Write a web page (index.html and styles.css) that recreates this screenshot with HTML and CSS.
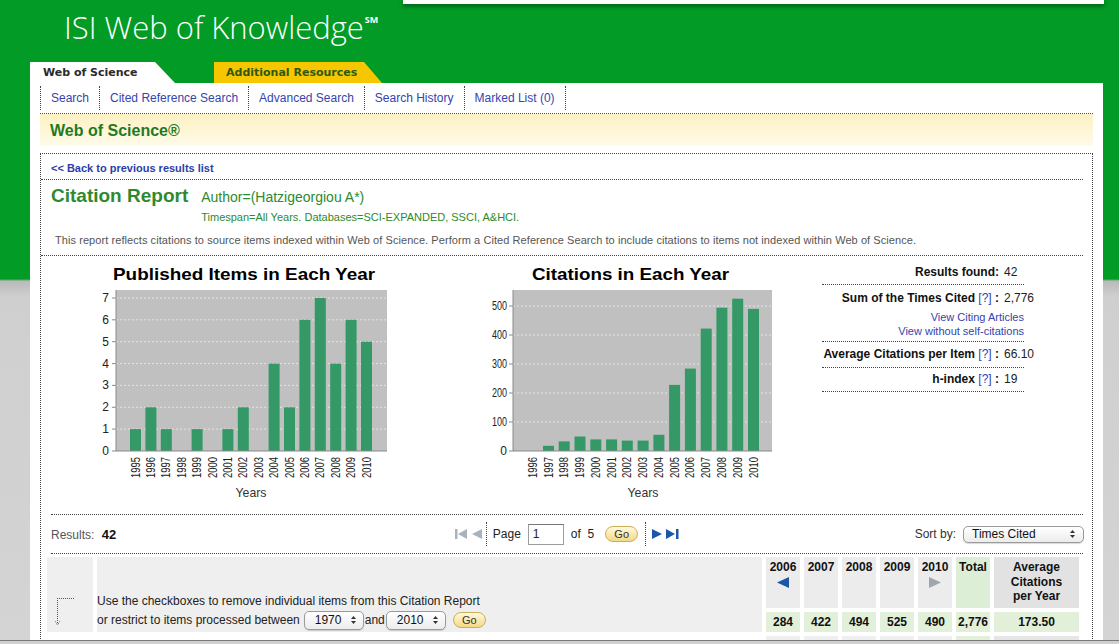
FILE: index.html
```html
<!DOCTYPE html>
<html lang="en">
<head>
    <meta charset="UTF-8">
    <title>ISI Web of Knowledge - Citation Report</title>
    <link rel="stylesheet" href="styles.css">
</head>
<body>
    <div class="top-strip"></div>
    <div class="brand">ISI Web of Knowledge<sup>SM</sup></div>

    <div class="tabs">
        <div class="tab tab-active">Web of Science</div>
        <div class="tab tab-resources">Additional Resources</div>
    </div>

    <div class="main">
        <ul class="nav">
            <li><a href="#">Search</a></li>
            <li><a href="#">Cited Reference Search</a></li>
            <li><a href="#">Advanced Search</a></li>
            <li><a href="#">Search History</a></li>
            <li><a href="#">Marked List (0)</a></li>
        </ul>

        <div class="product-bar">Web of Science®</div>

        <div class="report">
            <div class="back"><a href="#">&lt;&lt; Back to previous results list</a></div>

            <div class="report-title">
                <div class="report-head">
                    <h1>Citation Report</h1>
                    <div class="query">
                        <div class="author">Author=(Hatzigeorgiou A*)</div>
                        <div class="timespan">Timespan=All Years. Databases=SCI-EXPANDED, SSCI, A&amp;HCI.</div>
                    </div>
                </div>
                <p class="note">This report reflects citations to source items indexed within Web of Science. Perform a Cited Reference Search to include citations to items not indexed within Web of Science.</p>
            </div>

            <div class="charts">
                <!-- Published items per year -->
                <svg class="chart chart-published" width="399" height="250" viewBox="0 0 399 250">
                    <text class="chart-title" x="203" y="24" textLength="262" lengthAdjust="spacingAndGlyphs">Published Items in Each Year</text>
                    <rect class="plot" x="75" y="34" width="271" height="161"/>
                    <line class="grid" x1="75" y1="173.1" x2="346" y2="173.1"/>
                    <line class="grid" x1="75" y1="151.3" x2="346" y2="151.3"/>
                    <line class="grid" x1="75" y1="129.4" x2="346" y2="129.4"/>
                    <line class="grid" x1="75" y1="107.6" x2="346" y2="107.6"/>
                    <line class="grid" x1="75" y1="85.7" x2="346" y2="85.7"/>
                    <line class="grid" x1="75" y1="63.8" x2="346" y2="63.8"/>
                    <line class="grid" x1="75" y1="42" x2="346" y2="42"/>

                    <rect class="bar" x="89" y="173.1" width="11" height="21.9"/>
                    <rect class="bar" x="104.4" y="151.3" width="11" height="43.7"/>
                    <rect class="bar" x="119.8" y="173.1" width="11" height="21.9"/>
                    <rect class="bar" x="150.6" y="173.1" width="11" height="21.9"/>
                    <rect class="bar" x="181.4" y="173.1" width="11" height="21.9"/>
                    <rect class="bar" x="196.8" y="151.3" width="11" height="43.7"/>
                    <rect class="bar" x="227.6" y="107.6" width="11" height="87.4"/>
                    <rect class="bar" x="243" y="151.3" width="11" height="43.7"/>
                    <rect class="bar" x="258.4" y="63.8" width="11" height="131.2"/>
                    <rect class="bar" x="273.8" y="42" width="11" height="153"/>
                    <rect class="bar" x="289.2" y="107.6" width="11" height="87.4"/>
                    <rect class="bar" x="304.6" y="63.8" width="11" height="131.2"/>
                    <rect class="bar" x="320" y="85.7" width="11" height="109.3"/>

                    <line class="axis" x1="75" y1="34" x2="75" y2="195"/>
                    <line class="axis" x1="71" y1="195" x2="346" y2="195"/>
                    <line class="axis" x1="71" y1="173.1" x2="75" y2="173.1"/>
                    <line class="axis" x1="71" y1="151.3" x2="75" y2="151.3"/>
                    <line class="axis" x1="71" y1="129.4" x2="75" y2="129.4"/>
                    <line class="axis" x1="71" y1="107.6" x2="75" y2="107.6"/>
                    <line class="axis" x1="71" y1="85.7" x2="75" y2="85.7"/>
                    <line class="axis" x1="71" y1="63.8" x2="75" y2="63.8"/>
                    <line class="axis" x1="71" y1="42" x2="75" y2="42"/>

                    <text class="y-label" x="68" y="199">0</text>
                    <text class="y-label" x="68" y="177.1">1</text>
                    <text class="y-label" x="68" y="155.3">2</text>
                    <text class="y-label" x="68" y="133.4">3</text>
                    <text class="y-label" x="68" y="111.6">4</text>
                    <text class="y-label" x="68" y="89.7">5</text>
                    <text class="y-label" x="68" y="67.8">6</text>
                    <text class="y-label" x="68" y="46">7</text>

                    <text class="x-label" transform="translate(98.5 201) rotate(-90)" textLength="21" lengthAdjust="spacingAndGlyphs">1995</text>
                    <text class="x-label" transform="translate(113.9 201) rotate(-90)" textLength="21" lengthAdjust="spacingAndGlyphs">1996</text>
                    <text class="x-label" transform="translate(129.3 201) rotate(-90)" textLength="21" lengthAdjust="spacingAndGlyphs">1997</text>
                    <text class="x-label" transform="translate(144.7 201) rotate(-90)" textLength="21" lengthAdjust="spacingAndGlyphs">1998</text>
                    <text class="x-label" transform="translate(160.1 201) rotate(-90)" textLength="21" lengthAdjust="spacingAndGlyphs">1999</text>
                    <text class="x-label" transform="translate(175.5 201) rotate(-90)" textLength="21" lengthAdjust="spacingAndGlyphs">2000</text>
                    <text class="x-label" transform="translate(190.9 201) rotate(-90)" textLength="21" lengthAdjust="spacingAndGlyphs">2001</text>
                    <text class="x-label" transform="translate(206.3 201) rotate(-90)" textLength="21" lengthAdjust="spacingAndGlyphs">2002</text>
                    <text class="x-label" transform="translate(221.7 201) rotate(-90)" textLength="21" lengthAdjust="spacingAndGlyphs">2003</text>
                    <text class="x-label" transform="translate(237.1 201) rotate(-90)" textLength="21" lengthAdjust="spacingAndGlyphs">2004</text>
                    <text class="x-label" transform="translate(252.5 201) rotate(-90)" textLength="21" lengthAdjust="spacingAndGlyphs">2005</text>
                    <text class="x-label" transform="translate(267.9 201) rotate(-90)" textLength="21" lengthAdjust="spacingAndGlyphs">2006</text>
                    <text class="x-label" transform="translate(283.3 201) rotate(-90)" textLength="21" lengthAdjust="spacingAndGlyphs">2007</text>
                    <text class="x-label" transform="translate(298.7 201) rotate(-90)" textLength="21" lengthAdjust="spacingAndGlyphs">2008</text>
                    <text class="x-label" transform="translate(314.1 201) rotate(-90)" textLength="21" lengthAdjust="spacingAndGlyphs">2009</text>
                    <text class="x-label" transform="translate(329.5 201) rotate(-90)" textLength="21" lengthAdjust="spacingAndGlyphs">2010</text>

                    <text class="axis-title" x="210" y="241" textLength="31" lengthAdjust="spacingAndGlyphs">Years</text>
                </svg>

                <!-- Citations per year -->
                <svg class="chart chart-citations" width="360" height="250" viewBox="0 0 360 250">
                    <text class="chart-title" x="190.5" y="24" textLength="197" lengthAdjust="spacingAndGlyphs">Citations in Each Year</text>
                    <rect class="plot" x="73" y="34" width="259" height="161"/>
                    <line class="grid" x1="73" y1="166" x2="332" y2="166"/>
                    <line class="grid" x1="73" y1="137" x2="332" y2="137"/>
                    <line class="grid" x1="73" y1="108" x2="332" y2="108"/>
                    <line class="grid" x1="73" y1="79" x2="332" y2="79"/>
                    <line class="grid" x1="73" y1="50" x2="332" y2="50"/>

                    <rect class="bar" x="103" y="189.8" width="11" height="5.2"/>
                    <rect class="bar" x="118.7" y="185.4" width="11" height="9.6"/>
                    <rect class="bar" x="134.5" y="180.5" width="11" height="14.5"/>
                    <rect class="bar" x="150.3" y="183.4" width="11" height="11.6"/>
                    <rect class="bar" x="166.1" y="183.4" width="11" height="11.6"/>
                    <rect class="bar" x="181.8" y="184.6" width="11" height="10.4"/>
                    <rect class="bar" x="197.6" y="184.6" width="11" height="10.4"/>
                    <rect class="bar" x="213.4" y="178.8" width="11" height="16.2"/>
                    <rect class="bar" x="229.1" y="128.9" width="11" height="66.1"/>
                    <rect class="bar" x="244.9" y="112.6" width="11" height="82.4"/>
                    <rect class="bar" x="260.7" y="72.6" width="11" height="122.4"/>
                    <rect class="bar" x="276.4" y="51.7" width="11" height="143.3"/>
                    <rect class="bar" x="292.2" y="42.7" width="11" height="152.3"/>
                    <rect class="bar" x="308" y="52.9" width="11" height="142.1"/>

                    <line class="axis" x1="73" y1="34" x2="73" y2="195"/>
                    <line class="axis" x1="69" y1="195" x2="332" y2="195"/>
                    <line class="axis" x1="69" y1="166" x2="73" y2="166"/>
                    <line class="axis" x1="69" y1="137" x2="73" y2="137"/>
                    <line class="axis" x1="69" y1="108" x2="73" y2="108"/>
                    <line class="axis" x1="69" y1="79" x2="73" y2="79"/>
                    <line class="axis" x1="69" y1="50" x2="73" y2="50"/>

                    <text class="y-label" x="67" y="199">0</text>
                    <text class="y-label" x="67" y="170" textLength="15" lengthAdjust="spacingAndGlyphs">100</text>
                    <text class="y-label" x="67" y="141" textLength="15" lengthAdjust="spacingAndGlyphs">200</text>
                    <text class="y-label" x="67" y="112" textLength="15" lengthAdjust="spacingAndGlyphs">300</text>
                    <text class="y-label" x="67" y="83" textLength="15" lengthAdjust="spacingAndGlyphs">400</text>
                    <text class="y-label" x="67" y="54" textLength="15" lengthAdjust="spacingAndGlyphs">500</text>

                    <text class="x-label" transform="translate(96.7 201) rotate(-90)" textLength="21" lengthAdjust="spacingAndGlyphs">1996</text>
                    <text class="x-label" transform="translate(112.5 201) rotate(-90)" textLength="21" lengthAdjust="spacingAndGlyphs">1997</text>
                    <text class="x-label" transform="translate(128.2 201) rotate(-90)" textLength="21" lengthAdjust="spacingAndGlyphs">1998</text>
                    <text class="x-label" transform="translate(144 201) rotate(-90)" textLength="21" lengthAdjust="spacingAndGlyphs">1999</text>
                    <text class="x-label" transform="translate(159.8 201) rotate(-90)" textLength="21" lengthAdjust="spacingAndGlyphs">2000</text>
                    <text class="x-label" transform="translate(175.6 201) rotate(-90)" textLength="21" lengthAdjust="spacingAndGlyphs">2001</text>
                    <text class="x-label" transform="translate(191.3 201) rotate(-90)" textLength="21" lengthAdjust="spacingAndGlyphs">2002</text>
                    <text class="x-label" transform="translate(207.1 201) rotate(-90)" textLength="21" lengthAdjust="spacingAndGlyphs">2003</text>
                    <text class="x-label" transform="translate(222.9 201) rotate(-90)" textLength="21" lengthAdjust="spacingAndGlyphs">2004</text>
                    <text class="x-label" transform="translate(238.6 201) rotate(-90)" textLength="21" lengthAdjust="spacingAndGlyphs">2005</text>
                    <text class="x-label" transform="translate(254.4 201) rotate(-90)" textLength="21" lengthAdjust="spacingAndGlyphs">2006</text>
                    <text class="x-label" transform="translate(270.2 201) rotate(-90)" textLength="21" lengthAdjust="spacingAndGlyphs">2007</text>
                    <text class="x-label" transform="translate(285.9 201) rotate(-90)" textLength="21" lengthAdjust="spacingAndGlyphs">2008</text>
                    <text class="x-label" transform="translate(301.7 201) rotate(-90)" textLength="21" lengthAdjust="spacingAndGlyphs">2009</text>
                    <text class="x-label" transform="translate(317.5 201) rotate(-90)" textLength="21" lengthAdjust="spacingAndGlyphs">2010</text>

                    <text class="axis-title" x="203" y="241" textLength="31" lengthAdjust="spacingAndGlyphs">Years</text>
                </svg>

                <div class="summary">
                    <div class="stat stat-first">
                        <span class="stat-label">Results found:</span>
                        <span class="stat-value">42</span>
                    </div>
                    <div class="stat stat-sum">
                        <span class="stat-label">Sum of the Times Cited <a href="#" class="help">[?]</a> :</span>
                        <span class="stat-value">2,776</span>
                        <div class="stat-links">
                            <a href="#">View Citing Articles</a><br>
                            <a href="#">View without self-citations</a>
                        </div>
                    </div>
                    <div class="stat stat-avg">
                        <span class="stat-label">Average Citations per Item <a href="#" class="help">[?]</a> :</span>
                        <span class="stat-value">66.10</span>
                    </div>
                    <div class="stat stat-h">
                        <span class="stat-label">h-index <a href="#" class="help">[?]</a> :</span>
                        <span class="stat-value">19</span>
                    </div>
                </div>
            </div>

            <div class="results-bar">
                <div class="results-count">Results: <b>42</b></div>
                <div class="pager">
                    <svg class="pager-icon" width="27" height="10" viewBox="0 0 27 10">
                        <rect x="0" y="0" width="2.5" height="10" fill="#a9b2c2"/>
                        <polygon points="12,0 3,5 12,10" fill="#a9b2c2"/>
                        <polygon points="27,0 17,5 27,10" fill="#a9b2c2"/>
                    </svg>
                    <span class="pager-sep"></span>
                    <span>Page</span>
                    <span class="page-input">1</span>
                    <span class="page-of">of&nbsp; 5</span>
                    <span class="go-btn go-pager">Go</span>
                    <span class="pager-sep pager-sep-right"></span>
                    <svg class="pager-icon" width="27" height="10" viewBox="0 0 27 10">
                        <polygon points="0,0 10,5 0,10" fill="#1d56a8"/>
                        <polygon points="14,0 23,5 14,10" fill="#1d56a8"/>
                        <rect x="24" y="0" width="2.5" height="10" fill="#1d56a8"/>
                    </svg>
                </div>
                <div class="sort">
                    Sort by:
                    <span class="mac-select sort-select">Times Cited
                        <svg width="7" height="10" viewBox="0 0 7 10"><polygon points="3.5,1 6,4 1,4" fill="#333"/><polygon points="1,6 6,6 3.5,9" fill="#333"/></svg>
                    </span>
                </div>
            </div>

            <div class="cite-table">
                <div class="cell cell-arrow">
                    <svg width="22" height="30" viewBox="0 0 22 30">
                        <path d="M2 1.5 H20 M2.5 1 V27" stroke="#555" stroke-width="1" stroke-dasharray="1 1" fill="none"/>
                        <path d="M0 24 L2.5 28 L5 24" stroke="#666" stroke-width="1" stroke-dasharray="1 1" fill="none"/>
                    </svg>
                </div>
                <div class="cell cell-info">
                    <div>Use the checkboxes to remove individual items from this Citation Report</div>
                    <div class="restrict">
                        or restrict to items processed between
                        <span class="mac-select year-select">1970
                            <svg width="7" height="10" viewBox="0 0 7 10"><polygon points="3.5,1 6,4 1,4" fill="#333"/><polygon points="1,6 6,6 3.5,9" fill="#333"/></svg>
                        </span><span class="and">and</span><span class="mac-select year-select">2010
                            <svg width="7" height="10" viewBox="0 0 7 10"><polygon points="3.5,1 6,4 1,4" fill="#333"/><polygon points="1,6 6,6 3.5,9" fill="#333"/></svg>
                        </span>
                        <span class="go-btn go-restrict">Go</span>
                    </div>
                </div>
                <div class="cell yr">2006
                    <svg class="yr-arrow" width="12" height="11" viewBox="0 0 12 11"><polygon points="12,0 0,5.5 12,11" fill="#1d56a8"/></svg>
                </div>
                <div class="cell yr">2007</div>
                <div class="cell yr">2008</div>
                <div class="cell yr">2009</div>
                <div class="cell yr">2010
                    <svg class="yr-arrow" width="12" height="11" viewBox="0 0 12 11"><polygon points="0,0 12,5.5 0,11" fill="#a0a6ae"/></svg>
                </div>
                <div class="cell yr total">Total</div>
                <div class="cell yr average">Average<br>Citations<br>per Year</div>

                <div class="cell val">284</div>
                <div class="cell val">422</div>
                <div class="cell val">494</div>
                <div class="cell val">525</div>
                <div class="cell val">490</div>
                <div class="cell val">2,776</div>
                <div class="cell val">173.50</div>

                <div class="cell blank"></div>
                <div class="cell blank"></div>
                <div class="cell next"></div>
                <div class="cell next"></div>
                <div class="cell next"></div>
                <div class="cell next"></div>
                <div class="cell next"></div>
                <div class="cell next next-total"></div>
                <div class="cell next next-avg"></div>
            </div>
        </div>
    </div>

    <div class="window-edge"></div>
</body>
</html>
```

FILE: styles.css
```css
html {
    background: linear-gradient(#019b25 0, #019b25 279px, #b9b9b9 281px, #cfcfcf 296px, #d4d4d4 100%);
    min-height: 100%;
}

body {
    margin: 0;
    font-family: "Liberation Sans", Arial, Helvetica, sans-serif;
    font-size: 12px;
    color: #222;
    height: 644px;
    overflow: hidden;
}

a {
    text-decoration: none;
}

/* Header */
.top-strip {
    margin-left: 403px;
    width: 701px;
    height: 4px;
    background: #fff;
    box-shadow: 0 2px 4px rgba(0, 0, 0, 0.45);
}

.brand {
    padding: 5px 0 17px 64px;
    font-family: "Open Sans", "Liberation Sans", sans-serif;
    font-weight: 300;
    font-size: 31px;
    line-height: 36px;
    color: #fff;
}

.brand sup {
    font-size: 9px;
    font-weight: 700;
    vertical-align: 16px;
    line-height: 0;
    margin-left: 1px;
}

.tabs {
    display: flex;
    margin-left: 30px;
    height: 21px;
}

.tab {
    height: 21px;
    line-height: 21px;
    box-sizing: border-box;
    font-family: "DejaVu Sans", Verdana, sans-serif;
    font-weight: bold;
    font-size: 11px;
}

.tab-active {
    width: 145px;
    padding-left: 13px;
    background: #fff;
    color: #2a2a2a;
    clip-path: polygon(0 0, 125px 0, 100% 100%, 0 100%);
}

.tab-resources {
    margin-left: 39px;
    width: 168px;
    padding-left: 12px;
    background: #f6c600;
    color: #2c5a14;
    clip-path: polygon(0 0, 150px 0, 100% 100%, 0 100%);
}

/* Main white panel */
.main {
    margin-left: 30px;
    width: 1073px;
    box-sizing: border-box;
    padding: 3px 10px 0 10px;
    background: #fff;
    min-height: 600px;
}

.nav {
    display: flex;
    list-style: none;
    margin: 0;
    padding: 0 0 3px;
    border-bottom: 1px dotted #555;
}

.nav li {
    border-left: 1px dotted #444;
    padding: 0 10px;
    line-height: 24px;
}

.nav li:last-child {
    border-right: 1px dotted #444;
}

.nav a {
    color: #3444ad;
}

.product-bar {
    height: 32px;
    line-height: 34px;
    padding-left: 10px;
    background: linear-gradient(#fdf1c2, #fffbea);
    color: #1f7a1f;
    font-size: 16px;
    font-weight: bold;
}

.report {
    margin-top: 7px;
    border: 1px dotted #444;
    padding-right: 9px;
}

.back {
    padding: 7px 0 4px 10px;
    line-height: 14px;
    border-bottom: 1px dotted #444;
    font-size: 11px;
    font-weight: bold;
}

.back a {
    color: #2c3ea8;
}

.report-title {
    padding: 4px 0 8px;
    border-bottom: 1px dotted #444;
}

.report-head {
    display: flex;
    align-items: baseline;
    padding-left: 10px;
}

.report-head h1 {
    margin: 0;
    font-size: 19px;
    line-height: 24px;
    color: #2f8a2f;
}

.query {
    margin-left: 13px;
    color: #2d8a2d;
}

.author {
    font-size: 14px;
    line-height: 18px;
}

.timespan {
    font-size: 11px;
    line-height: 14px;
    margin-top: 4px;
}

.note {
    margin: 9px 0 0 14px;
    font-size: 11px;
    line-height: 14px;
    letter-spacing: 0.07px;
    color: #555;
}

/* Charts */
.charts {
    display: flex;
    height: 250px;
}

.chart {
    display: block;
    font-family: "Liberation Sans", Arial, sans-serif;
}

.plot {
    fill: #c0c0c0;
}

.grid {
    stroke: #e4e4e4;
    stroke-width: 1;
    stroke-dasharray: 2 2;
}

.bar {
    fill: #349966;
}

.axis {
    stroke: #8a8a8a;
    stroke-width: 1;
}

.chart-title {
    font-size: 17px;
    font-weight: bold;
    fill: #000;
    text-anchor: middle;
}

.y-label {
    font-size: 12px;
    fill: #222;
    text-anchor: end;
}

.x-label {
    font-size: 12px;
    fill: #222;
    text-anchor: end;
}

.axis-title {
    font-size: 13px;
    fill: #333;
    text-anchor: middle;
}

.summary {
    margin: 2px 0 0 22px;
    width: 202px;
}

.stat {
    display: grid;
    grid-template-columns: 1fr 25px;
    border-bottom: 1px dotted #444;
    line-height: 13px;
}

.stat-label {
    text-align: right;
    font-weight: bold;
    color: #111;
}

.stat-value {
    padding-left: 5px;
    white-space: nowrap;
}

.help {
    color: #3444ad;
    font-weight: normal;
}

.stat-first {
    padding: 8px 0 5px;
}

.stat-sum {
    padding: 7px 0 3px;
}

.stat-links {
    grid-column: 1 / 3;
    text-align: right;
    margin-top: 5px;
    font-size: 11px;
    line-height: 14px;
}

.stat-links a {
    color: #3444ad;
}

.stat-avg {
    padding: 6px 0;
}

.stat-h {
    padding: 5px 0;
}

/* Results / pager bar */
.results-bar {
    margin: 8px 0 0 10px;
    height: 38px;
    border-top: 1px dotted #444;
    border-bottom: 1px dotted #444;
    display: grid;
    grid-template-columns: 1fr auto 1fr;
    align-items: center;
}

.results-count {
    color: #555;
}

.results-count b {
    color: #111;
    font-size: 13px;
    margin-left: 4px;
}

.pager {
    display: flex;
    align-items: center;
}

.pager-icon {
    display: block;
}

.pager-sep {
    border-left: 1px dotted #444;
    height: 24px;
    margin: 0 6px 0 4px;
}

.pager-sep-right {
    margin: 0 6px 0 7px;
}

.page-input {
    width: 36px;
    height: 21px;
    box-sizing: border-box;
    border: 1px solid #9c9c9c;
    border-top-color: #777;
    padding-left: 4px;
    line-height: 19px;
    margin: 0 7px 0 7px;
}

.page-of {
    margin-right: 11px;
}

.go-btn {
    display: inline-block;
    width: 33px;
    height: 16px;
    box-sizing: border-box;
    border: 1px solid #cdae58;
    border-radius: 8px;
    background: linear-gradient(#fff9de, #f4da86);
    font-size: 11px;
    line-height: 14px;
    text-align: center;
    color: #333;
}

.sort {
    justify-self: end;
    display: flex;
    align-items: center;
    color: #333;
    margin-right: -1px;
}

.mac-select {
    display: inline-flex;
    align-items: center;
    justify-content: space-between;
    box-sizing: border-box;
    border: 1px solid #9a9a9a;
    border-radius: 5px;
    background: linear-gradient(#ffffff, #ececec);
    box-shadow: 0 1px 1px rgba(0, 0, 0, 0.15);
    color: #111;
    font-size: 12px;
}

.sort-select {
    width: 121px;
    height: 17px;
    margin-left: 7px;
    padding: 0 7px 0 8px;
}

.year-select {
    width: 60px;
    height: 19px;
    padding: 0 6px 0 10px;
}

/* Citation table */
.cite-table {
    margin: 3px 0 0 6px;
    display: grid;
    grid-template-columns: 46px 665px repeat(6, 34px) 85px;
    grid-template-rows: 51px 20px 30px;
    column-gap: 4px;
    row-gap: 4px;
}

.cell {
    background: #ececec;
}

.cell-arrow {
    grid-row: 1 / 3;
    background: #efefef;
    display: flex;
    align-items: flex-end;
    padding: 0 0 5px 8px;
}

.cell-info {
    grid-row: 1 / 3;
    background: #efefef;
    display: flex;
    flex-direction: column;
    justify-content: flex-end;
    padding-bottom: 2px;
    line-height: 18px;
    color: #222;
}

.restrict {
    display: flex;
    align-items: center;
    height: 20px;
}

.restrict .year-select:first-of-type {
    margin-left: 4px;
}

.and {
    margin: 0 1px;
}

.go-restrict {
    margin-left: 7px;
}

.yr {
    text-align: center;
    font-weight: bold;
    padding-top: 3px;
    line-height: 14px;
    color: #111;
}

.yr-arrow {
    display: block;
    margin: 3px auto 0;
}

.total {
    background: #dcefd6;
}

.average {
    background: #e2e2e2;
    line-height: 14.5px;
}

.val {
    background: #e2f0da;
    text-align: center;
    font-weight: bold;
    line-height: 20px;
    color: #111;
}

.blank {
    background: #fff;
}

.next {
    background: #efefef;
}

.next-total {
    background: #e2f0da;
}

.next-avg {
    background: #e6e6e6;
}

/* Bottom edge of the browser window */
.window-edge {
    position: fixed;
    left: 0;
    right: 0;
    bottom: 0;
    height: 3px;
    border-top: 1px solid #7a7a7a;
    background: #d0d0d0;
}
```
